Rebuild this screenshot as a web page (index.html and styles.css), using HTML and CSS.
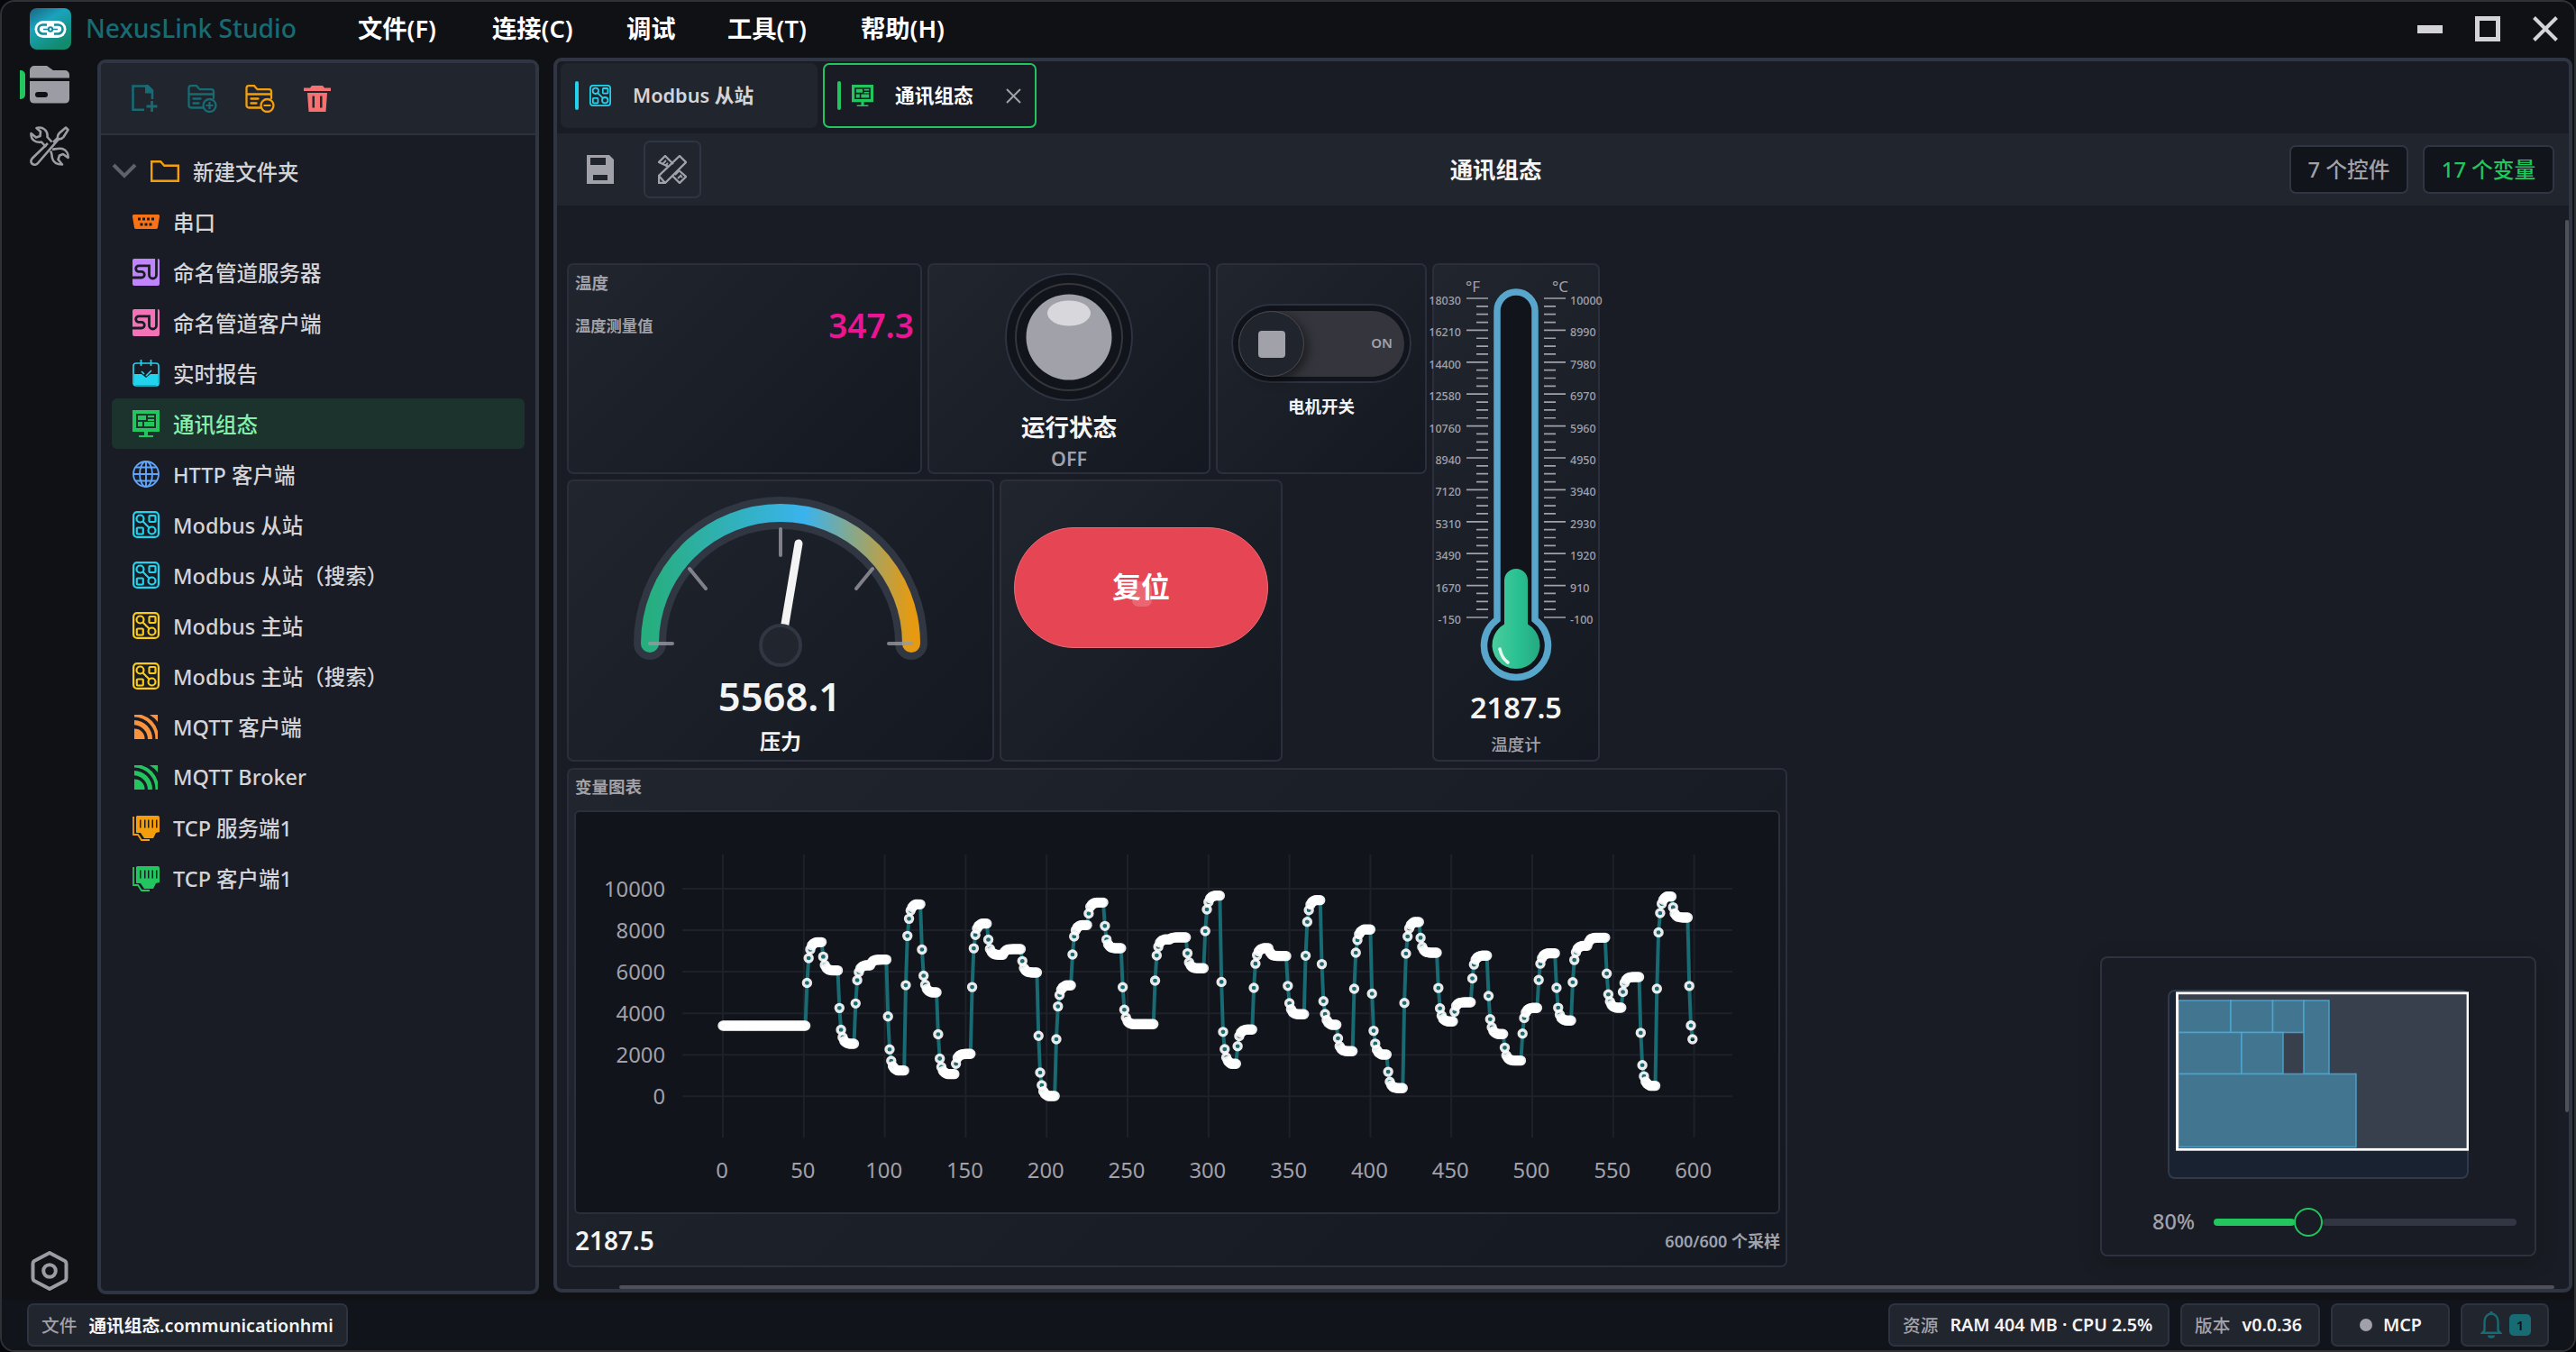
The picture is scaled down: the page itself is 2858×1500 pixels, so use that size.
FILE: index.html
```html
<!DOCTYPE html>
<html lang="zh-CN">
<head>
  <meta charset="UTF-8">
  <meta name="viewport" content="width=device-width, initial-scale=1.0">
  <title>NexusLink Studio</title>
  <link rel="stylesheet" href="styles.css">
</head>
<body>
  <!-- icon sprite -->
  <svg class="sprite" width="0" height="0">
    <symbol id="i-serial" viewBox="0 0 30 30">
      <path fill="currentColor" fill-rule="evenodd" d="M2 7h26a2 2 0 0 1 2 2.400l-2 12A2 2 0 0 1 26 23H4a2 2 0 0 1-2-1.600L0 9.400A2 2 0 0 1 2 7zM6 10.500v3h3v-3zM11 10.500v3h3v-3zM16 10.500v3h3v-3zM21 10.500v3h3v-3zM8.500 16.500v3h3v-3zM13.500 16.500v3h3v-3zM18.500 16.500v3h3v-3z"/>
    </symbol>
    <symbol id="i-pipe" viewBox="0 0 30 30">
      <path fill="currentColor" d="M2 0h26a2 2 0 0 1 2 2v26a2 2 0 0 1-2 2H2a2 2 0 0 1-2-2V2a2 2 0 0 1 2-2z"/>
      <path fill="none" stroke="#191c24" stroke-width="2.800" d="M0 21h10a3.300 3.300 0 0 0 3.300-3.300 3.300 3.300 0 0 0-3.300-3.300H7a3.300 3.300 0 0 1 0-6.600h11.500V18a4 4 0 0 0 8 0V0"/>
    </symbol>
    <symbol id="i-report" viewBox="0 0 30 30">
      <rect x="1" y="4" width="28" height="25" rx="3" fill="none" stroke="currentColor" stroke-width="1.700"/>
      <path fill="currentColor" d="M2 16h8l5 4 5-4h8v12H2z"/>
      <path fill="none" stroke="currentColor" stroke-width="1.700" d="M9.500 0v7M20.500 0v7M10 13l3 3M21 12l-6 6"/>
    </symbol>
    <symbol id="i-hmi" viewBox="0 0 30 30">
      <path fill="currentColor" fill-rule="evenodd" d="M0 0h30v24H17v4h6v2H7v-2h6v-4H0zM4 4v16h22V4z"/>
      <path fill="currentColor" d="M6 6h9v5H6zM17 6h7v2h-7zM17 10h7v2h-7zM6 13h5v5H6zM13 13h11v5H13z"/>
    </symbol>
    <symbol id="i-globe" viewBox="0 0 30 30">
      <g fill="none" stroke="currentColor" stroke-width="1.900">
        <circle cx="15" cy="15" r="14"/><ellipse cx="15" cy="15" rx="7" ry="14"/>
        <path d="M15 1v28M1 15h28M3.500 7.500h23M3.500 22.500h23"/>
      </g>
    </symbol>
    <symbol id="i-modbus" viewBox="0 0 30 30">
      <g fill="none" stroke="currentColor" stroke-width="2.200">
        <rect x="1.100" y="1.100" width="27.800" height="27.800" rx="4"/>
        <circle cx="8.500" cy="8.500" r="4"/><circle cx="21.500" cy="21.500" r="4"/>
        <path d="M11.300 11.300l7.400 7.400"/>
        <rect x="18.500" y="5" width="7" height="7" rx="1"/><rect x="4.800" y="18.500" width="7" height="7" rx="1"/>
      </g>
    </symbol>
    <symbol id="i-mqtt" viewBox="0 0 30 30">
      <g fill="currentColor">
        <path d="M2 17.500A11 11 0 0 1 13.500 29H2zM2 8a20.500 20.500 0 0 1 20 21h-5A16 16 0 0 0 2 13.300z"/>
        <path d="M2 2h8a28 28 0 0 1 18 18v9h-2.500A24 24 0 0 0 2 4.500zM19 2h9v8a32 32 0 0 0-9-8z"/>
      </g>
    </symbol>
    <symbol id="i-tcp" viewBox="0 0 30 30">
      <path fill="currentColor" fill-rule="evenodd" d="M5 2h23a2 2 0 0 1 2 2v16l-4 1-3 6H13l-4-6H5a1 1 0 0 1-1-1V3zM8 6.500v9h1.500v-9zM13 6.500v9h1.500v-9zM17 6.500v9h1.500v-9zM21.500 6.500v9H23v-9zM26 6.500v9h1.500v-9z"/>
      <path fill="none" stroke="currentColor" stroke-width="1.800" d="M2 4H1v19h5l4 6h9"/>
    </symbol>
    <symbol id="i-folder" viewBox="0 0 32 24">
      <path fill="none" stroke="currentColor" stroke-width="2.400" d="M1.200 1.200h10l4 4.500h15.600v17H1.200z"/>
    </symbol>
    <symbol id="i-newfile" viewBox="0 0 30 30">
      <path fill="none" stroke="currentColor" stroke-width="2.600" d="M14 27.700H1.500V1.500H18l5 5V16"/>
      <path fill="currentColor" d="M15 0h3l6 6v3.500h-9z"/>
      <path fill="none" stroke="currentColor" stroke-width="2.800" d="M22.500 18v12M16.500 24h12"/>
    </symbol>
    <symbol id="i-foldercard" viewBox="0 0 33 31">
      <g fill="none" stroke="currentColor" stroke-width="2.300" stroke-linecap="round">
        <path d="M17 25.500H4a2.500 2.500 0 0 1-2.500-2.500V3.500A2.500 2.500 0 0 1 4 1.200h6l3.500 4h13A2.500 2.500 0 0 1 29 7.500V15M2 10.500h27M6.500 15.500h8M6.500 20.500h6"/>
        <circle cx="24.500" cy="23" r="7"/>
      </g>
    </symbol>
    <symbol id="i-trash" viewBox="0 0 30 30">
      <path fill="currentColor" fill-rule="evenodd" d="M0 3.500h7L9 1h12l2 2.500h7V7H0zM4 9h22l-1.500 21h-19zM9.500 12.500v13H12v-13zM18 12.500v13h2.500v-13z"/>
    </symbol>
    <symbol id="i-bell" viewBox="0 0 24 30">
      <path fill="none" stroke="currentColor" stroke-width="2.400" d="M4.500 21V11a7.500 8.500 0 0 1 15 0v10l2.500 2.800H2z"/>
      <path fill="currentColor" d="M8 26.500h8a4 3.200 0 0 1-8 0zM10.500 0h3v3h-3z"/>
    </symbol>
    <symbol id="i-x" viewBox="0 0 28 28">
      <path fill="none" stroke="currentColor" stroke-width="4" d="M1.500 1.500l25 25M26.500 1.500l-25 25"/>
    </symbol>
  </svg>

  <div class="window">
    <header class="titlebar">
      <svg class="logo" viewBox="0 0 46 46">
        <defs>
          <linearGradient id="logoGrad" x1="0" y1="0" x2=".6" y2="1">
            <stop offset="0" stop-color="#1b6482"/><stop offset=".4" stop-color="#1aa3bd"/><stop offset="1" stop-color="#128a6c"/>
          </linearGradient>
        </defs>
        <rect width="46" height="46" rx="8" fill="url(#logoGrad)"/>
        <rect x="5.500" y="14" width="35" height="19" rx="9.500" fill="#fff"/>
        <g fill="none" stroke="#148a9c" stroke-width="2.600">
          <path d="M19 18.500h-4.500a5 5 0 0 0 0 10H19M27 18.500h4.500a5 5 0 0 1 0 10H27"/>
          <circle cx="23" cy="23.500" r="2.200" stroke-width="2"/>
          <path stroke-width="1.600" d="M15 23.500h5M26 23.500h5"/>
        </g>
      </svg>
      <span class="app-name">NexusLink Studio</span>
      <nav class="menu">
        <span class="menu-file">文件(F)</span>
        <span class="menu-connect">连接(C)</span>
        <span class="menu-debug">调试</span>
        <span class="menu-tools">工具(T)</span>
        <span class="menu-help">帮助(H)</span>
      </nav>
      <div class="window-buttons">
        <span class="btn-min"></span>
        <span class="btn-max"></span>
        <svg width="28" height="28"><use href="#i-x"/></svg>
      </div>
    </header>

    <div class="body">
      <aside class="rail">
        <div class="rail-item active">
          <svg width="44" height="42" viewBox="0 0 44 42">
            <path fill="currentColor" d="M5 0h14l7 5h13a5 5 0 0 1 5 5v3.500H0V5a5 5 0 0 1 5-5z"/>
            <path fill="currentColor" fill-rule="evenodd" d="M0 17h44v20a5 5 0 0 1-5 4.500H5A5 5 0 0 1 0 37zM9 29a3 3 0 0 0 0 6h8a3 3 0 0 0 0-6z"/>
          </svg>
        </div>
        <div class="rail-item">
          <svg width="44" height="44" viewBox="0 0 44 44" fill="none" stroke="currentColor" stroke-width="2.600" stroke-linejoin="round">
            <path d="M26 18l5-5c-.500-3 .500-4 2-5.500L40 1.500l2.500 2.500-5 8c-1.500 2-3 2.500-5.500 2.300L9 41c-2 2.500-5 2-6.500.500s-1.500-4 .5-6L20 19"/>
            <path d="M18 23l-5-5.500C7 18.500 1 15.500 1.500 8l5.500 4.500 4.500-1.500.5-5L7.500 2c7-2 13 3 12 10l5 5.500M25 26c5-1 7-2 11-1 5 1.500 7 6 6.500 10L37 31l-4 1.500-1.500 4.500 4.500 5.500c-6 0-10-3-11-7-1-4 0-5-2-8"/>
          </svg>
        </div>
        <div class="rail-item rail-settings">
          <svg width="42" height="44" viewBox="0 0 42 44" fill="none" stroke="currentColor" stroke-width="4" stroke-linejoin="round">
            <path d="M21 2l17 9q1.500 1 1.500 3v16q0 2-1.500 3l-17 9-17-9q-1.500-1-1.500-3V14q0-2 1.500-3z"/>
            <circle cx="21" cy="22" r="6.800"/>
          </svg>
        </div>
      </aside>

      <aside class="explorer">
        <div class="explorer-toolbar">
          <svg class="teal" width="30" height="30"><use href="#i-newfile"/></svg>
          <svg class="teal" width="33" height="31"><use href="#i-foldercard"/><path d="M20.500 23h8M24.500 19v8" stroke="currentColor" stroke-width="2.200"/></svg>
          <svg class="amber" width="33" height="31"><use href="#i-foldercard"/><path d="M20.500 23h8" stroke="currentColor" stroke-width="2.200"/></svg>
          <svg class="red" width="30" height="30"><use href="#i-trash"/></svg>
        </div>
        <ul class="tree">
          <li class="folder">
            <svg class="chevron" width="28" height="18" viewBox="0 0 28 18"><path d="M2 2l12 12L26 2" fill="none" stroke="#5f606c" stroke-width="4"/></svg>
            <svg class="amber" width="32" height="24"><use href="#i-folder"/></svg>
            <span>新建文件夹</span>
          </li>
          <li><svg style="color:#f97316"><use href="#i-serial"/></svg><span>串口</span></li>
          <li><svg style="color:#c084fc"><use href="#i-pipe"/></svg><span>命名管道服务器</span></li>
          <li><svg style="color:#f472b6"><use href="#i-pipe"/></svg><span>命名管道客户端</span></li>
          <li><svg style="color:#22d3ee"><use href="#i-report"/></svg><span>实时报告</span></li>
          <li class="selected"><svg style="color:#22c55e"><use href="#i-hmi"/></svg><span>通讯组态</span></li>
          <li><svg style="color:#60a5fa"><use href="#i-globe"/></svg><span>HTTP 客户端</span></li>
          <li><svg style="color:#22d3ee"><use href="#i-modbus"/></svg><span>Modbus 从站</span></li>
          <li><svg style="color:#22d3ee"><use href="#i-modbus"/></svg><span>Modbus 从站（搜索）</span></li>
          <li><svg style="color:#facc15"><use href="#i-modbus"/></svg><span>Modbus 主站</span></li>
          <li><svg style="color:#facc15"><use href="#i-modbus"/></svg><span>Modbus 主站（搜索）</span></li>
          <li><svg style="color:#fb923c"><use href="#i-mqtt"/></svg><span>MQTT 客户端</span></li>
          <li><svg style="color:#22c55e"><use href="#i-mqtt"/></svg><span>MQTT Broker</span></li>
          <li><svg style="color:#f59e0b"><use href="#i-tcp"/></svg><span>TCP 服务端1</span></li>
          <li><svg style="color:#22c55e"><use href="#i-tcp"/></svg><span>TCP 客户端1</span></li>
        </ul>
      </aside>

      <main class="editor">
        <div class="tabs">
          <div class="tab tab-modbus">
            <i class="tab-bar"></i>
            <svg width="24" height="24"><use href="#i-modbus"/></svg>
            <span>Modbus 从站</span>
          </div>
          <div class="tab tab-hmi">
            <i class="tab-bar"></i>
            <svg width="24" height="24"><use href="#i-hmi"/></svg>
            <span>通讯组态</span>
            <svg class="tab-close" width="17" height="17" viewBox="0 0 17 17"><path d="M1 1l15 15M16 1L1 16" fill="none" stroke="#a1a1aa" stroke-width="2"/></svg>
          </div>
        </div>

        <div class="toolbar">
          <div class="tool-left">
            <svg width="30" height="32" viewBox="0 0 30 32"><path fill="#a1a1aa" fill-rule="evenodd" d="M0 0h25l5 5v27H0zM4 3v8h17V3zM7 22v6h16v-6z"/></svg>
            <span class="design-btn">
              <svg width="32" height="32" viewBox="0 0 32 32" fill="none" stroke="#a1a1aa" stroke-width="2.300">
                <path d="M1 31v-8L24 1l7 7L8 31zM1 23l7 8M12 13L1 8l7-7 9 9M22 16l9 8-7 7-8-8"/>
                <path stroke-width="1.800" d="M5 10l4-4M8 12l3-3M19 22l4-4M22 26l4-4M25 23l2 2"/>
              </svg>
            </span>
          </div>
          <h1>通讯组态</h1>
          <div class="badges">
            <span class="badge">7 个控件</span>
            <span class="badge badge-green">17 个变量</span>
          </div>
        </div>

        <div class="canvas">
          <div class="upper">
            <div class="left-block">
              <div class="row">
                <section class="card card-temp">
                  <div class="card-title">温度</div>
                  <div class="temp-row"><span>温度测量值</span><b>347.3</b></div>
                </section>
                <section class="card card-lamp">
                  <svg width="144" height="144" viewBox="0 0 144 144">
                    <circle cx="72" cy="72" r="70" fill="#11141b" stroke="#2d3340" stroke-width="2"/>
                    <circle cx="72" cy="72" r="59" fill="none" stroke="#35363a" stroke-width="2"/>
                    <circle cx="72" cy="72" r="47.500" fill="#a1a1aa"/>
                    <ellipse cx="72" cy="45.500" rx="24" ry="14" fill="#d8d8dc"/>
                  </svg>
                  <div class="lamp-name">运行状态</div>
                  <div class="lamp-state">OFF</div>
                </section>
                <section class="card card-switch">
                  <div class="switch">
                    <div class="switch-track">
                      <span class="knob"><i></i></span>
                      <span class="switch-text">ON</span>
                    </div>
                  </div>
                  <div class="switch-name">电机开关</div>
                </section>
              </div>
              <div class="row">
                <section class="card card-gauge">
                  <svg width="470" height="216" viewBox="631 534 470 216">
                    <defs>
                      <linearGradient id="gaugeGrad">
                        <stop offset="0" stop-color="#27ae7f"/><stop offset=".59" stop-color="#3ab3ee"/><stop offset="1" stop-color="#e59a12"/>
                      </linearGradient>
                    </defs>
                    <g fill="none" stroke-linecap="round">
                      <path d="M721 714a145 145 0 0 1 290 0" stroke="#303642" stroke-width="36"/>
                      <path d="M721 714a145 145 0 0 1 290 0" stroke="url(#gaugeGrad)" stroke-width="20"/>
                      <path d="M721 714h25M986 714h25M866 587v29M765 631l18 22M968 631l-18 22" stroke="#9a98a2" stroke-opacity=".8" stroke-width="4"/>
                      <path d="M867 716l19-113" stroke="#f4f4f5" stroke-width="9"/>
                      <circle cx="866" cy="716" r="22" fill="#21252d" stroke="#303642" stroke-width="4"/>
                    </g>
                  </svg>
                  <div class="gauge-value">5568.1</div>
                  <div class="gauge-name">压力</div>
                </section>
                <section class="card card-reset">
                  <div class="reset-btn">复位</div>
                </section>
              </div>
            </div>
            <section class="card card-thermo">
              <svg id="thermo" width="206" height="468" viewBox="1579 294 206 468">
                <defs>
                  <linearGradient id="mercury"><stop offset="0" stop-color="#4ccc9f"/><stop offset=".55" stop-color="#29c091"/><stop offset="1" stop-color="#25a97f"/></linearGradient>
                </defs>
                <text x="1634" y="324" class="unit">°F</text>
                <text x="1731" y="324" class="unit">°C</text>
                <path d="M1661 687.400V345a21 21 0 0 1 42 0v342.400a35.500 35.500 0 1 1-42 0z" fill="#11141b" stroke="#58a6cc" stroke-width="7.500"/>
                <path d="M1669 692.500V644a13 13 0 0 1 26 0v48.500a26.500 26.500 0 1 1-26 0z" fill="url(#mercury)"/>
                <path d="M1664 720q2 10 9 15" fill="none" stroke="#e4f8ef" stroke-width="3.600" stroke-linecap="round"/>
              </svg>
              <div class="thermo-value">2187.5</div>
              <div class="thermo-name">温度计</div>
            </section>
          </div>
          <section class="card card-chart">
            <div class="card-title">变量图表</div>
            <div class="plot"><svg id="chart" width="1334" height="444" viewBox="639 900 1334 444"></svg></div>
            <div class="chart-foot"><b>2187.5</b><span>600/600 个采样</span></div>
          </section>

          <div class="minimap-panel">
            <svg width="334" height="210" viewBox="2405 1098 334 210">
              <rect x="2406" y="1099" width="332" height="208" rx="7" fill="#182230" stroke="#2f3b4d" stroke-width="2"/>
              <rect x="2415.500" y="1101.500" width="322.500" height="174" fill="#38404e"/>
              <g fill="#42758f" stroke="#4cabd8" stroke-opacity=".8" stroke-width="1.600">
                <rect x="2417" y="1110" width="58" height="35.500"/><rect x="2475" y="1110" width="46.500" height="35.500"/>
                <rect x="2521.500" y="1110" width="34.500" height="35.500"/><rect x="2556" y="1110" width="28" height="81.500"/>
                <rect x="2417" y="1145.500" width="70" height="46"/><rect x="2487" y="1145.500" width="46" height="46"/>
                <rect x="2417" y="1191.500" width="197" height="81"/>
              </g>
              <rect x="2415.500" y="1101.800" width="322.500" height="173.500" fill="none" stroke="#fff" stroke-width="2.800"/>
            </svg>
            <div class="zoom-row">
              <span>80%</span>
              <i class="zoom-done"></i><i class="zoom-thumb"></i><i class="zoom-rest"></i>
            </div>
          </div>
          <i class="vscroll"></i>
          <i class="hscroll"></i>
        </div>
      </main>
    </div>

    <footer class="statusbar">
      <div class="chip chip-file"><span>文件</span><b>通讯组态.communicationhmi</b></div>
      <div class="chip chip-res"><span>资源</span><b>RAM 404 MB · CPU 2.5%</b></div>
      <div class="chip chip-ver"><span>版本</span><b>v0.0.36</b></div>
      <div class="chip chip-mcp"><i></i><b>MCP</b></div>
      <div class="chip chip-bell"><svg width="24" height="30"><use href="#i-bell"/></svg><em>1</em></div>
    </footer>
  </div>

  <script src="script.js"></script>
</body>
</html>
```
FILE: styles.css
```css
* {
  box-sizing: border-box;
}

body {
  margin: 0;
  background: #05070d;
  color: #f4f4f5;
  font-family: "Noto Sans", "Noto Sans CJK SC", sans-serif;
  font-weight: 600;
  white-space: nowrap;
}

svg {
  display: block;
  flex-shrink: 0;
}

i, em {
  font-style: normal;
}

b {
  font-weight: 600;
}

.sprite {
  position: absolute;
}

.window {
  display: flex;
  flex-direction: column;
  width: 2858px;
  height: 1500px;
  border: 2px solid #303134;
  border-radius: 16px;
  background: #0f1114;
  overflow: hidden;
}

/* title bar */
.titlebar {
  display: flex;
  align-items: center;
  height: 60px;
  padding: 0 18px 0 31px;
}

.logo {
  width: 46px;
  height: 46px;
}

.app-name {
  width: 302px;
  margin-left: 16px;
  padding-bottom: 3px;
  color: #186a73;
  font-size: 28.2px;
  font-weight: 500;
}

.menu {
  display: flex;
  padding-bottom: 4px;
  color: #fff;
  font-size: 27.3px;
}

.menu-file, .menu-connect {
  width: 149px;
}

.menu-debug {
  width: 112px;
}

.menu-tools {
  width: 148px;
}

.window-buttons {
  display: flex;
  align-items: center;
  gap: 36px;
  margin-left: auto;
  color: #d4d4d8;
}

.btn-min {
  width: 28px;
  height: 9px;
  background: #d4d4d8;
}

.btn-max {
  width: 28px;
  height: 28px;
  border: 5px solid #d4d4d8;
}

/* left rail */
.body {
  display: flex;
  height: 1380px;
}

.rail {
  display: flex;
  flex-direction: column;
  width: 106px;
  padding: 11px 0 10px 31px;
  color: #9c9ca4;
}

.rail-item {
  position: relative;
  height: 67px;
}

.rail-item.active::before {
  content: "";
  position: absolute;
  left: -11px;
  top: 5px;
  width: 6px;
  height: 32px;
  border-radius: 0 5px 5px 0;
  background: #22c55e;
}

.rail-settings {
  height: 44px;
  margin-top: auto;
  margin-left: 1px;
}

/* explorer */
.explorer {
  width: 490px;
  height: 1370px;
  margin-top: 4px;
  border: 4px solid #2f3542;
  border-radius: 9px;
  background: #191c24;
  overflow: hidden;
}

.explorer-toolbar {
  display: flex;
  gap: 32px;
  height: 80px;
  padding: 24px 0 0 34px;
  border-bottom: 2px solid #2d323e;
  background: #21252d;
}

.explorer-toolbar svg:nth-child(3) {
  margin-left: -1px;
}

.teal { color: #186a73; }
.amber { color: #f59e0b; }
.red { color: #f87171; }

.tree {
  margin: 0;
  padding: 12px 12px 0;
  list-style: none;
  color: #d4d4d8;
  font-size: 23.5px;
  font-weight: 550;
}

.tree li {
  display: flex;
  align-items: center;
  gap: 15px;
  height: 56px;
  padding-left: 23px;
  border-radius: 6px;
}

.tree li span {
  padding-bottom: 1px;
}

.tree li:not(.folder) svg {
  width: 30px;
  height: 30px;
}

.tree .folder {
  gap: 15px;
  padding-left: 0;
}

.tree .selected {
  background: #1b332c;
  color: #86efac;
}

/* editor */
.editor {
  width: 2240px;
  height: 1370px;
  margin: 2px 0 0 16px;
  border: 4px solid #2f3542;
  border-radius: 9px;
  background: #191c24;
  overflow: hidden;
}

.tabs {
  display: flex;
  gap: 6px;
  height: 80px;
  padding: 2px 0 0 4px;
}

.tab {
  display: flex;
  align-items: center;
  height: 72px;
  border-radius: 7px;
}

.tab span {
  margin-left: 24px;
  padding-bottom: 4px;
  color: #d4d4d8;
  font-size: 21.7px;
}

.tab-bar {
  width: 4px;
  height: 32px;
  margin-right: 12px;
  border-radius: 2px;
  background: currentColor;
}

.tab-modbus {
  width: 285px;
  padding-left: 16px;
  background: #21252d;
  color: #22d3ee;
}

.tab-hmi {
  width: 237px;
  padding-left: 14px;
  border: 2px solid #22c55e;
  color: #22c55e;
}

.tab-hmi span {
  color: #fff;
}

.tab-close {
  margin-left: 36px;
}

.toolbar {
  display: grid;
  grid-template-columns: 1fr auto 1fr;
  align-items: center;
  height: 80px;
  padding: 0 16px 0 33px;
  background: #21252d;
}

.tool-left {
  display: flex;
  align-items: center;
  gap: 33px;
}

.design-btn {
  display: flex;
  align-items: center;
  justify-content: center;
  width: 64px;
  height: 64px;
  border: 2px solid #2f3542;
  border-radius: 7px;
}

.toolbar h1 {
  margin: 0;
  padding-bottom: 3px;
  transform: translateX(-83px);
  font-size: 25.4px;
  font-weight: 600;
}

.badges {
  display: flex;
  justify-content: flex-end;
  gap: 16px;
}

.badge {
  width: 132px;
  height: 54px;
  border: 2px solid #2f3542;
  border-radius: 7px;
  background: #11141b;
  color: #a1a1aa;
  font-size: 23.7px;
  font-weight: 550;
  line-height: 50px;
  text-align: center;
}

.badge-green {
  width: 146px;
  color: #22c55e;
}

/* canvas with the widgets */
.canvas {
  position: relative;
  display: flex;
  flex-direction: column;
  gap: 6px;
  height: 1202px;
  padding: 64px 0 0 11px;
}

.upper, .row {
  display: flex;
  gap: 6px;
}

.left-block {
  display: flex;
  flex-direction: column;
  gap: 6px;
}

.card {
  display: flex;
  flex-direction: column;
  border: 2px solid #2b2f3b;
  border-radius: 7px;
  background: linear-gradient(135deg, #21252d, #141820);
}

.card-title {
  color: #a1a1aa;
  font-size: 18.5px;
}

.card-temp {
  width: 394px;
  height: 234px;
  padding: 6px 7px 0 7px;
}

.temp-row {
  display: flex;
  align-items: center;
  justify-content: space-between;
  height: 52px;
  margin-top: 8px;
  color: #a1a1aa;
  font-size: 17.3px;
}

.temp-row b {
  color: #ec1492;
  font-size: 37px;
}

.card-lamp {
  align-items: center;
  width: 314px;
  height: 234px;
  padding-top: 8px;
}

.lamp-name {
  height: 36px;
  margin-top: 10px;
  font-size: 26.5px;
  line-height: 36px;
}

.lamp-state {
  color: #a1a1aa;
  font-size: 21.5px;
  line-height: 33px;
}

.card-switch {
  align-items: center;
  width: 234px;
  height: 234px;
  padding-top: 43px;
}

.switch {
  width: 200px;
  height: 88px;
  padding: 6px;
  border: 2px solid #2d3340;
  border-radius: 44px;
  background: #11141b;
}

.switch-track {
  display: flex;
  align-items: center;
  justify-content: space-between;
  height: 73px;
  padding-right: 13px;
  border-radius: 37px;
  background: #35363d;
}

.knob {
  display: flex;
  align-items: center;
  justify-content: center;
  width: 73px;
  height: 73px;
  border: 1px solid #4a4a50;
  border-radius: 50%;
  background: #20242c;
  box-shadow: 4px 4px 12px rgba(0, 0, 0, 0.5);
}

.knob i {
  width: 30px;
  height: 30px;
  border-radius: 4px;
  background: #a1a1aa;
}

.switch-text {
  padding-bottom: 3px;
  color: #a1a1aa;
  font-size: 15px;
}

.switch-name {
  margin-top: 12px;
  font-size: 18.5px;
}

.card-gauge {
  align-items: center;
  width: 474px;
  height: 313px;
}

.gauge-value {
  margin-top: -8px;
  padding-right: 2px;
  font-size: 43.5px;
  line-height: 60px;
}

.gauge-name {
  font-size: 23px;
  line-height: 40px;
}

.card-reset {
  width: 314px;
  height: 313px;
  padding: 51px 14px 0 14px;
}

.reset-btn {
  position: relative;
  height: 134px;
  border: 1px solid #ea6b78;
  border-radius: 67px;
  background: #e64553;
  color: #fff;
  font-size: 32px;
  line-height: 130px;
  text-align: center;
}

.reset-btn::after {
  content: "";
  position: absolute;
  left: 130px;
  top: 59px;
  width: 22px;
  height: 28px;
  border-radius: 7px;
  background: rgba(255, 255, 255, 0.18);
}

.card-thermo {
  align-items: center;
  width: 186px;
  height: 553px;
}

.card-thermo text {
  fill: #a1a1aa;
  font-size: 12.5px;
  font-weight: 500;
}

.card-thermo .unit {
  font-size: 17px;
  font-weight: 400;
  text-anchor: middle;
}

.thermo-value {
  margin-top: -1px;
  font-size: 32.5px;
  line-height: 48px;
}

.thermo-name {
  color: #a1a1aa;
  font-size: 18.5px;
  font-weight: 500;
  line-height: 33px;
}

.card-chart {
  width: 1354px;
  height: 554px;
  padding: 5px 6px 0 7px;
  margin-top: 1px;
}

.plot {
  height: 448px;
  margin: 14px 0 0 -1px;
  border: 2px solid #2b2f3b;
  border-radius: 6px;
  background: #11141b;
}

.plot text {
  fill: #a1a1aa;
  font-size: 23.8px;
  font-weight: 400;
}

.chart-foot {
  display: flex;
  align-items: center;
  justify-content: space-between;
  height: 64px;
}

.chart-foot b {
  font-size: 28px;
}

.chart-foot span {
  color: #a1a1aa;
  font-size: 18px;
}

/* minimap floats over the canvas */
.minimap-panel {
  position: absolute;
  left: 1712px;
  top: 833px;
  display: flex;
  flex-direction: column;
  width: 484px;
  height: 333px;
  padding: 35px 20px 0 54px;
  border: 2px solid #2d323e;
  border-radius: 8px;
  background: #191c24;
  box-shadow: 0 6px 24px rgba(0, 0, 0, 0.18);
}

.minimap-panel > svg {
  margin-left: 19px;
}

.zoom-row {
  display: flex;
  align-items: center;
  height: 36px;
  margin-top: 30px;
  color: #a1a1aa;
  font-size: 23.5px;
  font-weight: 500;
}

.zoom-row span {
  width: 70px;
  padding: 0 0 2px 2px;
}

.zoom-done {
  width: 90px;
  height: 8px;
  border-radius: 4px;
  background: #22c55e;
}

.zoom-thumb {
  width: 32px;
  height: 32px;
  margin-left: -1px;
  border: 2px solid #22c55e;
  border-radius: 50%;
}

.zoom-rest {
  width: 215px;
  height: 8px;
  border-radius: 4px;
  background: #323642;
}

.vscroll, .hscroll {
  position: absolute;
  border-radius: 2px;
  background: #505058;
}

.vscroll {
  right: 0;
  top: 16px;
  width: 4px;
  height: 990px;
}

.hscroll {
  left: 69px;
  bottom: 0;
  width: 2147px;
  height: 4px;
}

/* status bar */
.statusbar {
  display: flex;
  gap: 12px;
  flex: 1;
  padding: 4px 28px 0 28px;
  background: #11141b;
}

.chip {
  display: flex;
  align-items: center;
  height: 48px;
  padding-left: 14px;
  border: 2px solid #2d3340;
  border-radius: 7px;
  background: #21252d;
  font-size: 19.7px;
}

.chip span, .chip b {
  padding-bottom: 2px;
}

.chip span {
  margin-right: 13px;
  color: #a1a1aa;
  font-weight: 500;
}

.chip-file {
  width: 356px;
  margin-right: auto;
}

.chip-res {
  width: 312px;
}

.chip-ver {
  width: 155px;
}

.chip-mcp {
  width: 132px;
  padding-left: 30px;
}

.chip-mcp i {
  width: 14px;
  height: 14px;
  margin-right: 12px;
  border-radius: 50%;
  background: #a1a1aa;
}

.chip-bell {
  width: 98px;
  padding-left: 20px;
  color: #186a73;
}

.chip-bell em {
  width: 24px;
  height: 24px;
  margin-left: 8px;
  border-radius: 5px;
  background: #186a73;
  color: #0f1114;
  font-size: 15px;
  line-height: 24px;
  text-align: center;
}
```
FILE: script.js
```js
const NS = 'http://www.w3.org/2000/svg';

function add(parent, tag, attrs, text) {
  const el = document.createElementNS(NS, tag);
  for (const key in attrs) el.setAttribute(key, attrs[key]);
  if (text !== undefined) el.textContent = text;
  parent.appendChild(el);
}

// thermometer scale: 10 major steps, 4 minor each
const thermo = document.getElementById('thermo');
const fahrenheit = [18030, 16210, 14400, 12580, 10760, 8940, 7120, 5310, 3490, 1670, -150];
const celsius = [10000, 8990, 7980, 6970, 5960, 4950, 3940, 2930, 1920, 910, -100];
for (let i = 0; i <= 40; i++) {
  const y = 331 + i * 8.85;
  const major = i % 4 === 0;
  add(thermo, 'path', {
    d: `M${major ? 1627 : 1638} ${y}H1651M1713 ${y}H${major ? 1737 : 1726}`,
    stroke: '#a1a1aa', 'stroke-width': 1.7
  });
  if (major) {
    add(thermo, 'text', { x: 1621, y: y + 7, 'text-anchor': 'end' }, fahrenheit[i / 4]);
    add(thermo, 'text', { x: 1742, y: y + 7 }, celsius[i / 4]);
  }
}

// chart: the signal eases to each setpoint after the given sample
const steps = [
  [0, 3400], [51, 7424], [61, 6064], [71, 2533], [81, 6310], [91, 6585], [101, 1245],
  [112, 9247], [122, 5007], [132, 1071], [143, 2040], [153, 8321], [163, 6816], [173, 7091],
  [184, 5962], [194, 15], [205, 5340], [215, 8249], [225, 9334], [235, 7134], [246, 3473],
  [266, 7560], [276, 7656], [286, 6165], [297, 9667], [307, 1563], [317, 3213], [327, 7134],
  [337, 6758], [348, 3951], [359, 9450], [369, 3444], [379, 2171], [389, 8032], [400, 2012],
  [410, 391], [420, 8394], [430, 6918], [441, 3603], [451, 4530], [462, 6773], [472, 2996],
  [482, 1722], [493, 4255], [503, 6889], [514, 3647], [524, 7250], [534, 7641], [545, 4269],
  [555, 5745], [566, 507], [576, 9624], [586, 8611], [596, 2187.5]
];
const ease = [0, 0.513, 0.81, 0.913, 0.962, 0.983, 0.993];
const samples = [];
let step = 0;
for (let i = 0; i < 600; i++) {
  while (step + 1 < steps.length && i >= steps[step + 1][0]) step++;
  const k = i - steps[step][0];
  const target = steps[step][1];
  const from = step ? steps[step - 1][1] : target;
  samples.push(from + (target - from) * (k < ease.length ? ease[k] : 1));
}

const chart = document.getElementById('chart');
const px = i => 802 + i * 1.796;
const py = v => 1215.3 - v * 0.02303;

for (let v = 0; v <= 10000; v += 2000) {
  add(chart, 'path', { d: `M757 ${py(v)}H1922`, stroke: '#1e2129', 'stroke-width': 2 });
  add(chart, 'text', { x: 738, y: py(v) + 9, 'text-anchor': 'end' }, v);
}
for (let i = 0; i <= 600; i += 50) {
  add(chart, 'path', { d: `M${px(i)} 947V1261`, stroke: '#1e2129', 'stroke-width': 2 });
  add(chart, 'text', { x: px(i) - 1, y: 1306, 'text-anchor': 'middle' }, i);
}
add(chart, 'polyline', {
  points: samples.map((v, i) => px(i) + ',' + py(v)).join(' '),
  fill: 'none', stroke: '#186a73', 'stroke-width': 4
});
// rings go on top of the line without a fill, so dense runs turn solid white
samples.forEach((v, i) => {
  add(chart, 'circle', {
    cx: px(i), cy: py(v), r: 4,
    fill: 'none', stroke: '#fff', 'stroke-opacity': 0.9, 'stroke-width': 3.4
  });
});
```
